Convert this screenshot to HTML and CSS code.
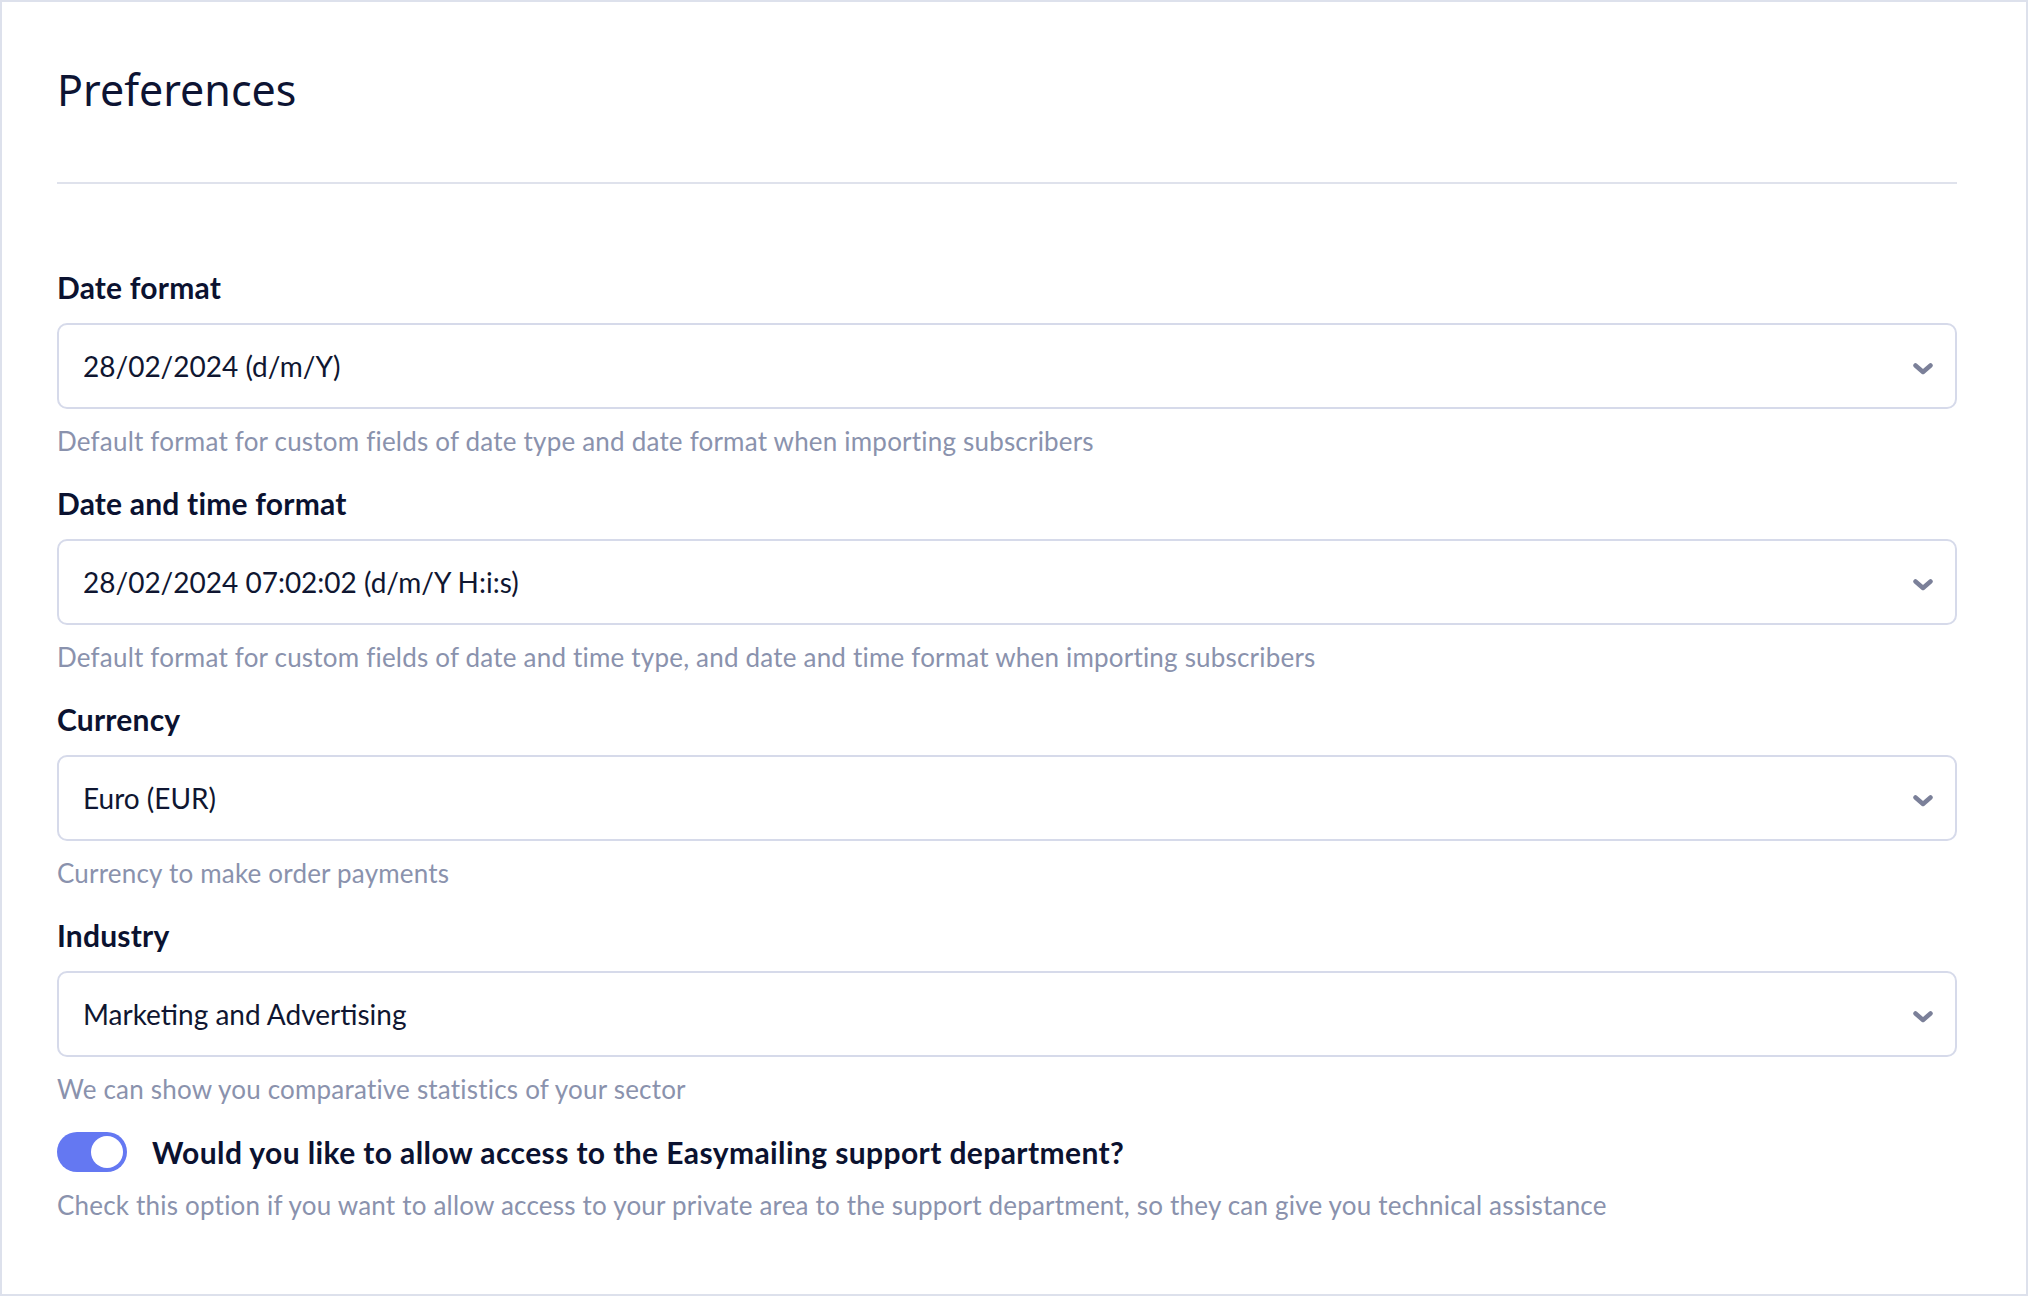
FILE: index.html
```html
<!DOCTYPE html>
<html lang="en">
<head>
    <meta charset="UTF-8">
    <meta name="viewport" content="width=device-width, initial-scale=1.0">
    <title>Preferences</title>
    <link rel="stylesheet" href="styles.css">
</head>
<body>
    <div class="page">
        <h1 class="title">Preferences</h1>
        <hr class="divider">

        <div class="field">
            <label class="field-label">Date format</label>
            <div class="select">
                <span>28/02/2024 (d/m/Y)</span>
                <svg class="chevron" viewBox="0 0 20 12"><path d="M2.5 2.5 L10 9 L17.5 2.5"/></svg>
            </div>
            <p class="hint">Default format for custom fields of date type and date format when importing subscribers</p>
        </div>

        <div class="field">
            <label class="field-label">Date and time format</label>
            <div class="select">
                <span>28/02/2024 07:02:02 (d/m/Y H:i:s)</span>
                <svg class="chevron" viewBox="0 0 20 12"><path d="M2.5 2.5 L10 9 L17.5 2.5"/></svg>
            </div>
            <p class="hint">Default format for custom fields of date and time type, and date and time format when importing subscribers</p>
        </div>

        <div class="field">
            <label class="field-label">Currency</label>
            <div class="select">
                <span>Euro (EUR)</span>
                <svg class="chevron" viewBox="0 0 20 12"><path d="M2.5 2.5 L10 9 L17.5 2.5"/></svg>
            </div>
            <p class="hint">Currency to make order payments</p>
        </div>

        <div class="field">
            <label class="field-label">Industry</label>
            <div class="select">
                <span>Marketing and Advertising</span>
                <svg class="chevron" viewBox="0 0 20 12"><path d="M2.5 2.5 L10 9 L17.5 2.5"/></svg>
            </div>
            <p class="hint">We can show you comparative statistics of your sector</p>
        </div>

        <div class="toggle-row">
            <span class="toggle"><span class="knob"></span></span>
            <span class="toggle-label">Would you like to allow access to the Easymailing support department?</span>
        </div>
        <p class="hint toggle-hint">Check this option if you want to allow access to your private area to the support department, so they can give you technical assistance</p>
    </div>
</body>
</html>
```

FILE: styles.css
```css
html,
body {
    margin: 0;
    height: 100%;
}

body {
    font-family: Lato, "Open Sans", sans-serif;
    background: #fff;
    color: #0d1431;
}

.page {
    box-sizing: border-box;
    height: 1296px;
    border: 2px solid #dde1ec;
    padding: 62px 69px 0 55px;
}

.title {
    font-family: "Noto Sans", sans-serif;
    font-weight: 400;
    font-size: 43px;
    line-height: 52px;
    margin: 0;
    color: #0d1433;
}

.divider {
    border: none;
    height: 2px;
    background: #dfe2ec;
    margin: 66px 0 85px;
}

.field {
    margin-bottom: 29px;
}

.field-label {
    display: block;
    font-weight: 700;
    font-size: 30px;
    line-height: 36px;
    letter-spacing: 0.2px;
    margin-bottom: 18px;
    color: #0b1230;
}

.select {
    box-sizing: border-box;
    height: 86px;
    border: 2px solid #d6daea;
    border-radius: 10px;
    display: flex;
    align-items: center;
    justify-content: space-between;
    padding: 0 22px 0 24px;
    font-size: 28px;
    color: #0f1631;
}

.chevron {
    width: 20px;
    height: 12px;
    margin-top: 6px;
    fill: none;
    stroke: #7b8099;
    stroke-width: 4.5;
    stroke-linecap: round;
    stroke-linejoin: round;
}

.hint {
    margin: 17px 0 0;
    font-size: 26px;
    line-height: 30px;
    letter-spacing: 0.2px;
    color: #8a92ad;
}

.toggle-row {
    display: flex;
    align-items: center;
    margin-top: -1px;
}

.toggle {
    box-sizing: border-box;
    width: 70px;
    height: 40px;
    border-radius: 20px;
    background: #6478f2;
    padding: 4px;
    display: flex;
    justify-content: flex-end;
}

.knob {
    width: 32px;
    height: 32px;
    border-radius: 50%;
    background: #fff;
}

.toggle-label {
    margin-left: 25px;
    font-weight: 700;
    font-size: 30px;
    line-height: 36px;
    letter-spacing: 0.4px;
    color: #0b1230;
}

.toggle-hint {
    margin-top: 18px;
}
```
